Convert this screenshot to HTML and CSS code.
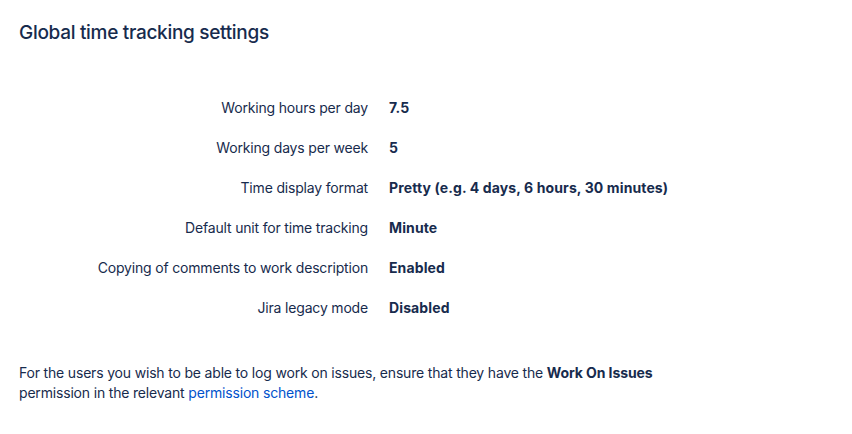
FILE: index.html
```html
<!DOCTYPE html>
<html>
<head>
<meta charset="utf-8">
<link rel="stylesheet" href="styles.css">
</head>
<body>
<main class="page">
  <h1 class="title">Global time tracking settings</h1>
  <dl class="settings">
    <dt>Working hours per day</dt><dd>7.5</dd>
    <dt>Working days per week</dt><dd>5</dd>
    <dt>Time display format</dt><dd>Pretty (e.g. 4 days, 6 hours, 30 minutes)</dd>
    <dt>Default unit for time tracking</dt><dd>Minute</dd>
    <dt>Copying of comments to work description</dt><dd>Enabled</dd>
    <dt>Jira legacy mode</dt><dd>Disabled</dd>
  </dl>
  <p class="note">For the users you wish to be able to log work on issues, ensure that they have the <strong>Work On Issues</strong><br>permission in the relevant <a href="#">permission scheme</a>.</p>
</main>
</body>
</html>
```
FILE: styles.css
```css
html, body {
  margin: 0;
  padding: 0;
  background: #ffffff;
}
body {
  font-family: Inter, "Liberation Sans", sans-serif;
  font-size: 14px;
  color: #172b4d;
  letter-spacing: -0.18px;
}
.page {
  padding: 20px 19px;
}
.title {
  margin: 0;
  font-size: 19px;
  font-weight: 500;
  line-height: 26px;
  letter-spacing: -0.3px;
}
.settings {
  display: grid;
  grid-template-columns: 349px 1fr;
  column-gap: 21px;
  row-gap: 20px;
  margin: 52px 0 0;
}
.settings dt {
  text-align: right;
  line-height: 20px;
}
.settings dd {
  margin: 0;
  font-weight: 700;
  letter-spacing: 0.12px;
  line-height: 20px;
}
.note {
  margin: 45px 0 0;
  line-height: 20px;
}
.note strong { font-weight: 700; letter-spacing: -0.1px; }
.note a {
  color: #0052cc;
  text-decoration: none;
}
```
